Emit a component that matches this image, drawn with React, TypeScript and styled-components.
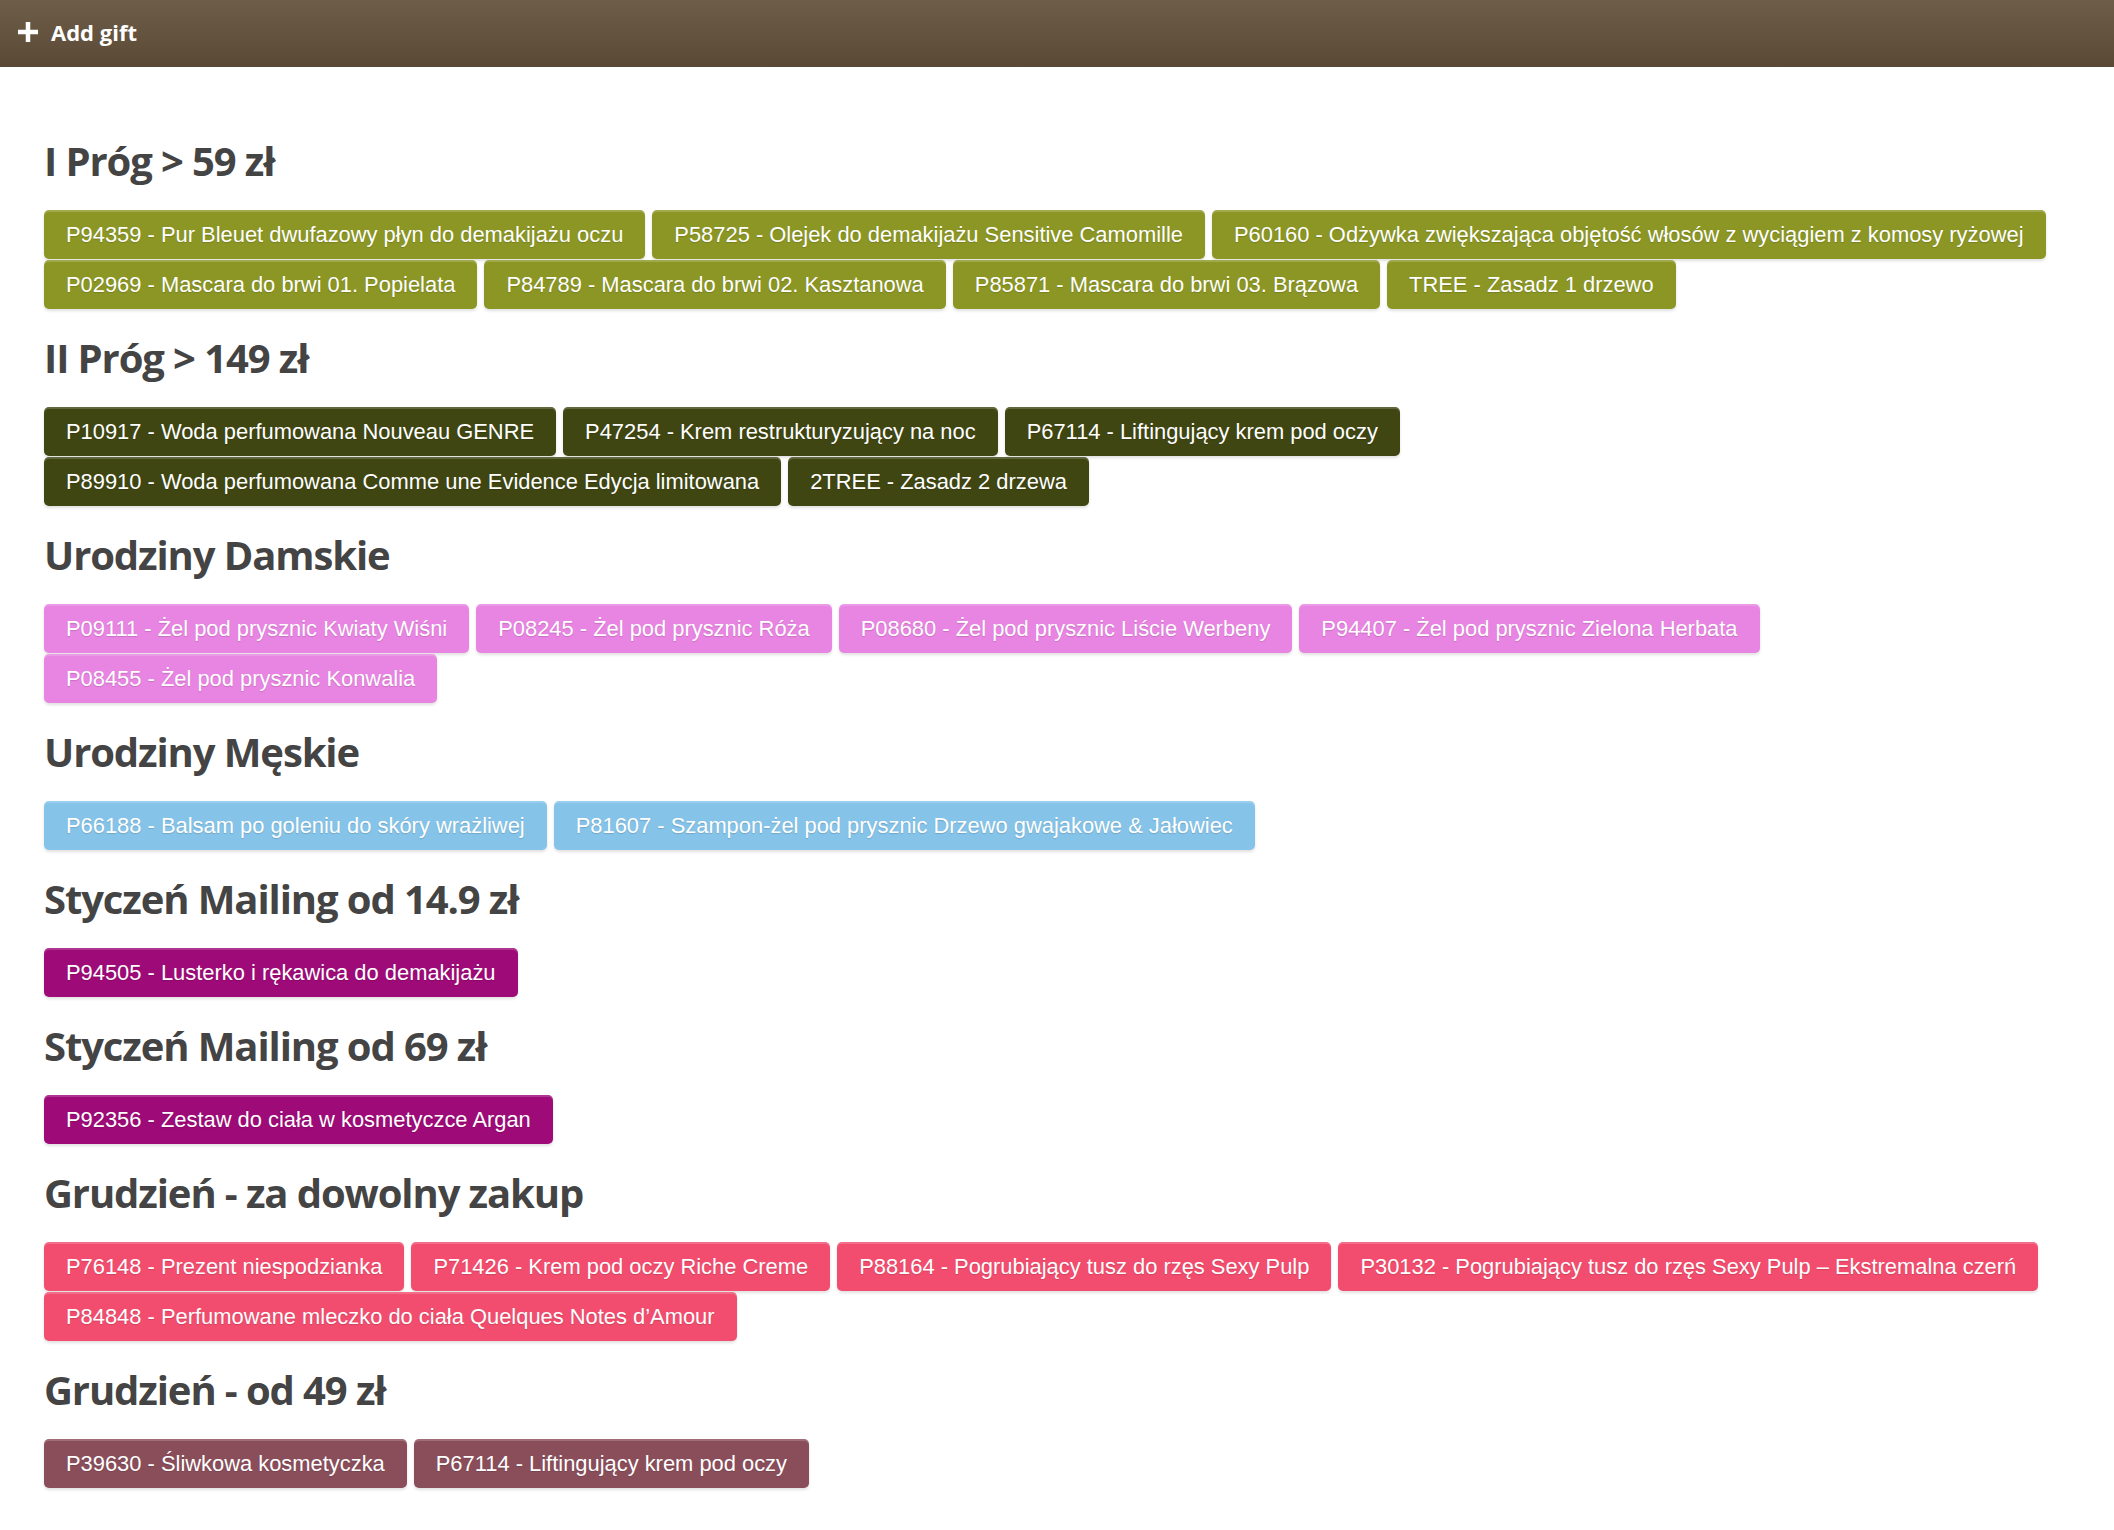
import React from 'react';
import styled, { createGlobalStyle } from 'styled-components';

const GlobalStyle = createGlobalStyle`
  html, body {
    margin: 0;
    padding: 0;
    background: #ffffff;
  }
  body {
    font-family: 'Liberation Sans', Arial, sans-serif;
  }
`

type Section = {
  title: string
  color: string
  gifts: string[]
}

const sections: Section[] = [
  {
    title: 'I Próg > 59 zł',
    color: '#8b9624',
    gifts: [
      'P94359 - Pur Bleuet dwufazowy płyn do demakijażu oczu',
      'P58725 - Olejek do demakijażu Sensitive Camomille',
      'P60160 - Odżywka zwiększająca objętość włosów z wyciągiem z komosy ryżowej',
      'P02969 - Mascara do brwi 01. Popielata',
      'P84789 - Mascara do brwi 02. Kasztanowa',
      'P85871 - Mascara do brwi 03. Brązowa',
      'TREE - Zasadz 1 drzewo',
    ],
  },
  {
    title: 'II Próg > 149 zł',
    color: '#3f4612',
    gifts: [
      'P10917 - Woda perfumowana Nouveau GENRE',
      'P47254 - Krem restrukturyzujący na noc',
      'P67114 - Liftingujący krem pod oczy',
      'P89910 - Woda perfumowana Comme une Evidence Edycja limitowana',
      '2TREE - Zasadz 2 drzewa',
    ],
  },
  {
    title: 'Urodziny Damskie',
    color: '#e884e2',
    gifts: [
      'P09111 - Żel pod prysznic Kwiaty Wiśni',
      'P08245 - Żel pod prysznic Róża',
      'P08680 - Żel pod prysznic Liście Werbeny',
      'P94407 - Żel pod prysznic Zielona Herbata',
      'P08455 - Żel pod prysznic Konwalia',
    ],
  },
  {
    title: 'Urodziny Męskie',
    color: '#85c3e8',
    gifts: [
      'P66188 - Balsam po goleniu do skóry wrażliwej',
      'P81607 - Szampon-żel pod prysznic Drzewo gwajakowe & Jałowiec',
    ],
  },
  {
    title: 'Styczeń Mailing od 14.9 zł',
    color: '#9e0a78',
    gifts: ['P94505 - Lusterko i rękawica do demakijażu'],
  },
  {
    title: 'Styczeń Mailing od 69 zł',
    color: '#9e0a78',
    gifts: ['P92356 - Zestaw do ciała w kosmetyczce Argan'],
  },
  {
    title: 'Grudzień - za dowolny zakup',
    color: '#f24d6e',
    gifts: [
      'P76148 - Prezent niespodzianka',
      'P71426 - Krem pod oczy Riche Creme',
      'P88164 - Pogrubiający tusz do rzęs Sexy Pulp',
      'P30132 - Pogrubiający tusz do rzęs Sexy Pulp – Ekstremalna czerń',
      'P84848 - Perfumowane mleczko do ciała Quelques Notes d’Amour',
    ],
  },
  {
    title: 'Grudzień - od 49 zł',
    color: '#8a4e5b',
    gifts: [
      'P39630 - Śliwkowa kosmetyczka',
      'P67114 - Liftingujący krem pod oczy',
    ],
  },
]

const Toolbar = styled.div`
  height: 67px;
  box-sizing: border-box;
  display: flex;
  align-items: center;
  padding: 0 0 4px 17px;
  background: linear-gradient(to bottom, #6e5d48 0%, #5a4934 100%);
`

const AddButton = styled.button`
  display: flex;
  align-items: center;
  gap: 12px;
  border: 0;
  padding: 0;
  background: transparent;
  color: #ffffff;
  font-family: 'Open Sans', sans-serif;
  font-weight: 700;
  font-size: 22px;
  cursor: pointer;
`

const Content = styled.div`
  padding: 45px 20px 40px 44px;
`

const SectionTitle = styled.h2`
  margin: 25px 0 25px;
  font-family: 'Open Sans', sans-serif;
  font-weight: 700;
  font-size: 40px;
  line-height: 48px;
  color: #444444;
  letter-spacing: -1.1px;
`

const GiftList = styled.div`
  display: flex;
  flex-wrap: wrap;
  column-gap: 7px;
  row-gap: 1px;
`

const GiftButton = styled.div<{ $color: string }>`
  height: 49px;
  line-height: 49px;
  padding: 0 22px;
  border-radius: 5px;
  background: ${p => p.$color};
  color: #ffffff;
  font-family: 'Liberation Sans', Arial, sans-serif;
  font-size: 21.9px;
  white-space: nowrap;
  text-shadow: 0 1px 1px rgba(0, 0, 0, 0.15);
  box-shadow: inset 0 2px 0 rgba(255, 255, 255, 0.18), 0 2px 3px rgba(0, 0, 0, 0.12);
  cursor: pointer;
`

const PlusIcon = () => (
  <svg width="22" height="22" viewBox="0 0 22 22">
    <path d="M11 1v20M1 11h20" stroke="#ffffff" strokeWidth="4.5" />
  </svg>
)

function App() {
  return <>
    <GlobalStyle />
    <Toolbar>
      <AddButton>
        <PlusIcon />
        Add gift
      </AddButton>
    </Toolbar>
    <Content>
      {sections.map((section, idx) =>
        <div key={idx}>
          <SectionTitle>{section.title}</SectionTitle>
          <GiftList>
            {section.gifts.map((gift, i) =>
              <GiftButton key={i} $color={section.color}>{gift}</GiftButton>
            )}
          </GiftList>
        </div>
      )}
    </Content>
  </>
}

export default App;
